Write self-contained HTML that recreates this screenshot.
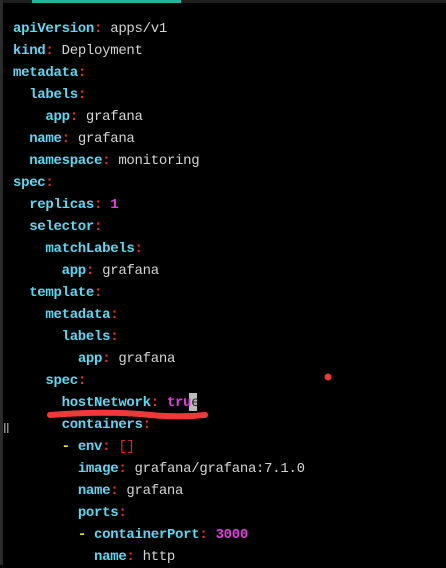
<!DOCTYPE html><html><head><style>
body{margin:0;width:446px;height:565px;background:#000;overflow:hidden;position:relative;font-family:"Liberation Mono",monospace;font-size:14px;letter-spacing:-0.3px}
.top{position:absolute;left:0;top:0;width:446px;height:3px;background:#1e1e1e}
.teal{position:absolute;left:32px;top:0;width:149px;height:3px;background:#1fb89a}
.lb{position:absolute;left:0;top:0;width:3px;height:565px;background:#2a2a2a}
.l{position:absolute;left:13px;white-space:pre;color:#d4d4d4;line-height:22px;height:22px}
.k{color:#5fd7f0;font-weight:bold}.c{color:#f03030;font-weight:bold}.n{color:#e040e0;font-weight:bold}.d{color:#f0e020;font-weight:bold}.r{color:#f02020}
</style></head><body>
<div class="top"></div><div class="teal"></div><div class="lb"></div>
<div class="l" style="top:18px"><span class="k">apiVersion</span><span class="c">:</span> apps/v1</div>
<div class="l" style="top:40px"><span class="k">kind</span><span class="c">:</span> Deployment</div>
<div class="l" style="top:62px"><span class="k">metadata</span><span class="c">:</span></div>
<div class="l" style="top:84px">  <span class="k">labels</span><span class="c">:</span></div>
<div class="l" style="top:106px">    <span class="k">app</span><span class="c">:</span> grafana</div>
<div class="l" style="top:128px">  <span class="k">name</span><span class="c">:</span> grafana</div>
<div class="l" style="top:150px">  <span class="k">namespace</span><span class="c">:</span> monitoring</div>
<div class="l" style="top:172px"><span class="k">spec</span><span class="c">:</span></div>
<div class="l" style="top:194px">  <span class="k">replicas</span><span class="c">:</span> <span class="n">1</span></div>
<div class="l" style="top:216px">  <span class="k">selector</span><span class="c">:</span></div>
<div class="l" style="top:238px">    <span class="k">matchLabels</span><span class="c">:</span></div>
<div class="l" style="top:260px">      <span class="k">app</span><span class="c">:</span> grafana</div>
<div class="l" style="top:282px">  <span class="k">template</span><span class="c">:</span></div>
<div class="l" style="top:304px">    <span class="k">metadata</span><span class="c">:</span></div>
<div class="l" style="top:326px">      <span class="k">labels</span><span class="c">:</span></div>
<div class="l" style="top:348px">        <span class="k">app</span><span class="c">:</span> grafana</div>
<div class="l" style="top:370px">    <span class="k">spec</span><span class="c">:</span></div>
<div style="position:absolute;left:189px;top:393px;width:8px;height:18px;background:#bbb"></div>
<div class="l" style="top:392px">      <span class="k">hostNetwork</span><span class="c">:</span> <span class="n">tru</span><span style="color:#222">e</span></div>
<div class="l" style="top:414px">      <span class="k">containers</span><span class="c">:</span></div>
<div class="l" style="top:436px">      <span class="d">-</span> <span class="k">env</span><span class="c">:</span> <span class="r">[]</span></div>
<div class="l" style="top:458px">        <span class="k">image</span><span class="c">:</span> grafana/grafana:7.1.0</div>
<div class="l" style="top:480px">        <span class="k">name</span><span class="c">:</span> grafana</div>
<div class="l" style="top:502px">        <span class="k">ports</span><span class="c">:</span></div>
<div class="l" style="top:524px">        <span class="d">-</span> <span class="k">containerPort</span><span class="c">:</span> <span class="n">3000</span></div>
<div class="l" style="top:546px">          <span class="k">name</span><span class="c">:</span> http</div>
<svg style="position:absolute;left:0;top:0" width="446" height="565"><path d="M50 415 Q100 411 140 414 Q175 418 205 415" stroke="#f03838" stroke-width="6" fill="none" stroke-linecap="round"/><circle cx="328" cy="377" r="3.5" fill="#f03838"/><rect x="4" y="423" width="1.5" height="10" fill="#888"/><rect x="7" y="423" width="1.5" height="10" fill="#888"/></svg>
</body></html>
